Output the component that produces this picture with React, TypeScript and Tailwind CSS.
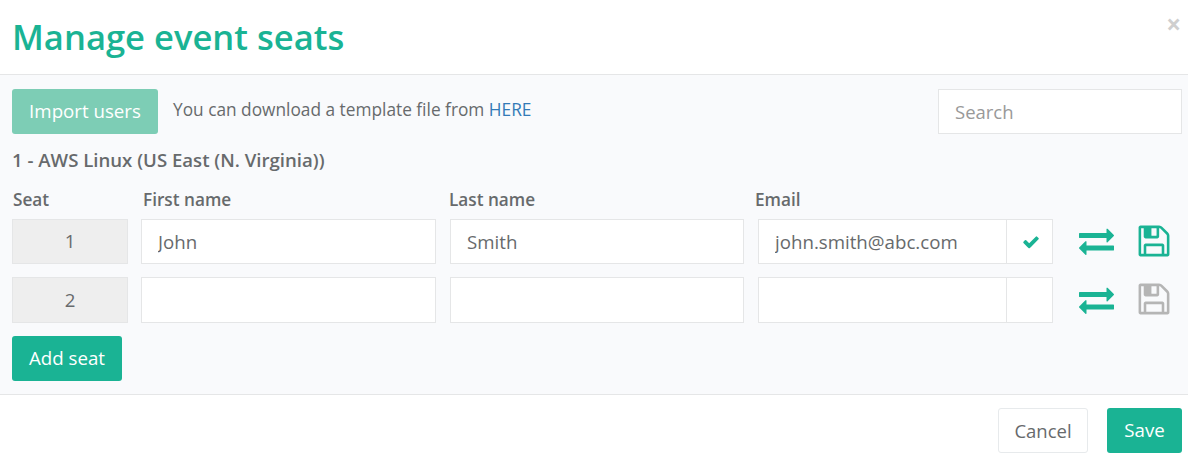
import React from "react";

const exchangePath =
  "M1792 1184v192q0 13-9.5 22.5t-22.5 9.5h-1376v192q0 13-9.5 22.5t-22.5 9.5q-12 0-24-10l-319-320q-9-9-9-22 0-14 9-23l320-320q9-9 23-9 13 0 22.5 9.5t9.5 22.5v192h1376q13 0 22.5 9.5t9.5 22.5zm0-544q0 14-9 23l-320 320q-9 9-23 9-13 0-22.5-9.5t-9.5-22.5v-192h-1376q-13 0-22.5-9.5t-9.5-22.5v-192q0-13 9.5-22.5t22.5-9.5h1376v-192q0-14 9-23t23-9q12 0 24 10l319 319q9 9 9 23z";
const savePath =
  "M512 1536h768v-384h-768v384zm896 0h128v-896q0-14-10-38.500t-20-34.500l-281-281q-10-10-34-20t-39-10v416q0 40-28 68t-68 28h-576q-40 0-68-28t-28-68v-416h-128v1280h128v-416q0-40 28-68t68-28h832q40 0 68 28t28 68v416zm-384-928v-320q0-13-9.500-22.500t-22.500-9.500h-192q-13 0-22.500 9.500t-9.500 22.500v320q0 13 9.500 22.500t22.500 9.500h192q13 0 22.500-9.500t9.500-22.500zm640 32v928q0 40-28 68t-68 28h-1344q-40 0-68-28t-28-68v-1344q0-40 28-68t68-28h928q40 0 88 20t76 48l280 280q28 28 48 76t20 88z";
const checkPath =
  "M1671 566q0 40-28 68l-724 724-136 136q-28 28-68 28t-68-28l-136-136-362-362q-28-28-28-68t28-68l136-136q28-28 68-28t68 28l294 295 656-657q28-28 68-28t68 28l136 136q28 28 28 68z";

function Glyph({ d, size, className }: { d: string; size: number; className: string }) {
  return (
    <svg width={size} height={size} viewBox="0 0 1792 1792" className={className} fill="currentColor">
      <path d={d} />
    </svg>
  );
}

interface SeatRowProps {
  seat: number;
  first: string;
  last: string;
  email: string;
  saved: boolean;
  rowClass: string;
}

function SeatRow({ seat, first, last, email, saved, rowClass }: SeatRowProps) {
  const inputClass =
    "min-w-0 h-full bg-white border border-[#e5e6e7] pl-4 pr-3 text-[18.7px] text-[#676a6c] outline-none";
  return (
    <div className={`flex items-stretch ${rowClass}`}>
      <div className="w-[116px] mr-[13px] flex items-center justify-center bg-[#eeeeee] border border-[#e5e6e7] text-[18.7px] text-[#676a6c]">
        {seat}
      </div>
      <input readOnly value={first} className={`w-[295px] mr-[14px] ${inputClass}`} />
      <input readOnly value={last} className={`w-[294px] mr-[14px] ${inputClass}`} />
      <div className="w-[295px] flex">
        <input readOnly value={email} className={`w-[249px] ${inputClass}`} />
        <div className="w-[46px] flex items-center justify-center bg-white border border-l-0 border-[#e5e6e7]">
          {saved && <Glyph d={checkPath} size={18} className="ml-[2px] text-[#1ab394]" />}
        </div>
      </div>
      <div className="flex items-center ml-[26px] mb-[2px]">
        <Glyph d={exchangePath} size={35} className="text-[#1ab394]" />
        <Glyph d={savePath} size={36} className={`ml-[22px] ${saved ? "text-[#1ab394]" : "text-[#b5b5b5]"}`} />
      </div>
    </div>
  );
}

export default function App() {
  return (
    <div className="w-[1188px] h-[466px] bg-white overflow-hidden text-[#676a6c] font-['Open_Sans',sans-serif]">
      <header className="relative h-[75px] border-b border-[#e5e6e7] pl-[12px] flex items-center">
        <h1 className="text-[34.6px] font-semibold text-[#1ab394] leading-none">Manage event seats</h1>
        <span className="absolute right-[7px] top-[9px] text-[26px] leading-[30px] font-bold text-[#cfcfcf]">×</span>
      </header>

      <main className="h-[320px] bg-[#f9fafc] border-b border-[#e5e6e7] pl-[12px] pr-[6px] pt-[14px]">
        <div className="flex items-center h-[45px]">
          <button className="w-[146px] h-[45px] rounded-[3px] bg-[#7dcdb5] text-white text-[18.7px]">Import users</button>
          <p className="ml-[15px] text-[17.3px] mb-[3px]">
            You can download a template file from <a className="text-[#337ab7]">HERE</a>
          </p>
          <input
            readOnly
            placeholder="Search"
            className="ml-auto w-[244px] h-[45px] bg-white border border-[#e5e6e7] px-4 text-[18.5px] outline-none placeholder:text-[#999999]"
          />
        </div>
        <h2 className="mt-[14px] text-[18.6px] leading-[24px] font-semibold">1 - AWS Linux (US East (N. Virginia))</h2>
        <div className="flex mt-[16px] pl-px h-[24px] text-[17.2px] leading-[24px] font-semibold">
          <span className="w-[130px]">Seat</span>
          <span className="w-[306px]">First name</span>
          <span className="w-[306px]">Last name</span>
          <span>Email</span>
        </div>
        <SeatRow seat={1} first="John" last="Smith" email="john.smith@abc.com" saved rowClass="mt-[7px] h-[45px]" />
        <SeatRow seat={2} first="" last="" email="" saved={false} rowClass="mt-[13px] h-[46px]" />
        <button className="mt-[13px] w-[110px] h-[45px] rounded-[3px] bg-[#1ab394] text-white text-[18.7px]">Add seat</button>
      </main>

      <footer className="flex justify-end pt-[13px] pr-[6px]">
        <button className="w-[90px] h-[45px] rounded-[3px] bg-white border border-[#e7eaec] text-[18.5px]">Cancel</button>
        <button className="ml-[19px] w-[75px] h-[45px] rounded-[3px] bg-[#1ab394] text-white text-[18.7px]">Save</button>
      </footer>
    </div>
  );
}
